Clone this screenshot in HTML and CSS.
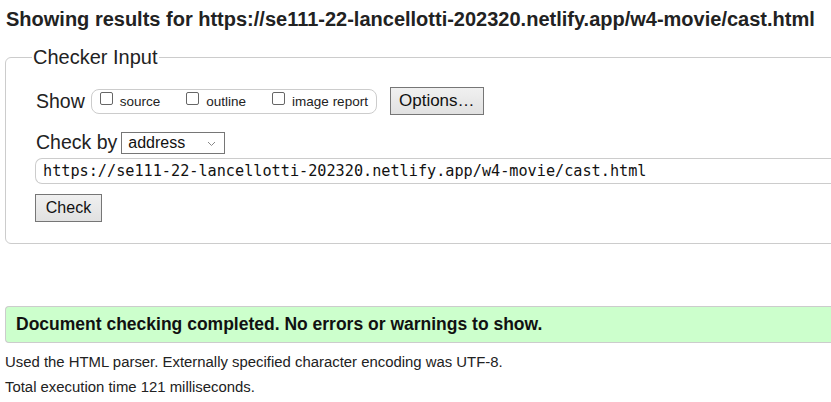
FILE: index.html
```html
<!DOCTYPE html>
<html>
<head>
<meta charset="utf-8">
<link rel="stylesheet" href="styles.css">
</head>
<body>
<h2 class="title">Showing results for https://se111-22-lancellotti-202320.netlify.app/w4-movie/cast.html</h2>
<form class="form">
  <fieldset class="fs">
    <legend class="legend">Checker Input</legend>
    <div class="row row-show">
      <span class="label">Show</span>
      <span class="group">
        <label class="opt"><span class="cb"></span>source</label>
        <label class="opt"><span class="cb"></span>outline</label>
        <label class="opt"><span class="cb"></span>image report</label>
      </span>
      <span class="btn btn-options">Options…</span>
    </div>
    <div class="row row-by">
      <span class="label">Check by</span>
      <span class="select">address<svg class="chev" width="9" height="6" viewBox="0 0 9 6"><path d="M1 1l3.5 3.5L8 1" fill="none" stroke="#888" stroke-width="1"/></svg></span>
    </div>
    <div class="urlbox">https://se111-22-lancellotti-202320.netlify.app/w4-movie/cast.html</div>
    <div class="row row-check"><span class="btn btn-check">Check</span></div>
  </fieldset>
</form>
<div class="success">Document checking completed. No errors or warnings to show.</div>
<p class="details">Used the HTML parser. Externally specified character encoding was UTF-8.</p>
<p class="details">Total execution time 121 milliseconds.</p>
</body>
</html>
```
FILE: styles.css
```css
html, body { margin: 0; padding: 0; }
body {
  font-family: "Liberation Sans", Arial, sans-serif;
  color: #000;
  background: #fff;
  padding: 0 0 0 5px;
  width: 900px;
  overflow: hidden;
}
.title {
  font-size: 20px;
  font-weight: bold;
  color: #222;
  margin: 0;
  padding: 8px 0 0 1px;
  line-height: 23px;
  white-space: nowrap;
}
.form { margin: 15px 0 0 0; }
.fs {
  margin: 0;
  border: 1px solid #ccc;
  border-radius: 6px;
  padding: 8px 0 21px 30px;
  width: 880px;
  box-sizing: border-box;
}
.legend {
  font-size: 20px;
  color: #222;
  padding: 0 1px;
  margin-left: -4px;
  line-height: 23px;
}
.row { display: flex; align-items: center; }
.label { font-size: 19.5px; color: #222; line-height: 23px; }
.row-show { margin-top: 10px; height: 28px; }
.group {
  display: inline-flex;
  align-items: center;
  gap: 26px;
  margin-left: 6px;
  height: 25px;
  box-sizing: border-box;
  border: 1px solid #ccc;
  border-radius: 8px;
  padding: 0 0 0 8px;
  width: 286px;
}
.opt {
  display: inline-flex;
  align-items: center;
  font-size: 13.5px;
  color: #222;
}
.cb {
  width: 13px; height: 13px;
  box-sizing: border-box;
  border: 1px solid #666;
  border-radius: 2px;
  margin-right: 7px;
  position: relative;
  top: -3px;
}
.btn {
  display: inline-flex;
  align-items: center;
  justify-content: center;
  box-sizing: border-box;
  border: 1px solid #767676;
  background: linear-gradient(#f0f0f0, #e1e1e1);
  color: #111;
  font-size: 16px;
}
.btn-options { margin-left: 13px; width: 94px; height: 28px; font-size: 17px; }
.row-by { margin-top: 16px; height: 23px; }
.select {
  margin-left: 4px;
  width: 104px;
  height: 22px;
  box-sizing: border-box;
  border: 1px solid #767676;
  font-size: 16px;
  color: #111;
  display: inline-flex;
  align-items: center;
  padding-left: 6px;
  position: relative;
}
.chev { position: absolute; right: 8px; top: 8px; }
.urlbox {
  margin-top: 4px;
  height: 26px;
  box-sizing: border-box;
  border: 1px solid #ccc;
  border-right: none;
  border-radius: 7px 0 0 7px;
  font-family: "DejaVu Sans Mono", "Liberation Mono", monospace;
  font-size: 15.2px;
  color: #111;
  padding-left: 7px;
  display: flex;
  align-items: center;
  margin-left: -1px;
}
.row-check { margin-top: 10px; }
.btn-check { width: 67px; height: 28px; margin-left: -1px; }
.success {
  margin-top: 62px;
  height: 37px;
  box-sizing: border-box;
  background: #ccffcc;
  border: 1px solid #ccc;
  border-right: none;
  border-radius: 4px 0 0 4px;
  font-size: 17.5px;
  font-weight: bold;
  color: #111;
  padding-left: 10px;
  display: flex;
  align-items: center;
  width: 900px;
}
.details {
  margin: 0;
  font-size: 14.9px;
  color: #222;
  line-height: 25px;
  padding-top: 7px;
}
.details + .details { padding-top: 0; }
```
